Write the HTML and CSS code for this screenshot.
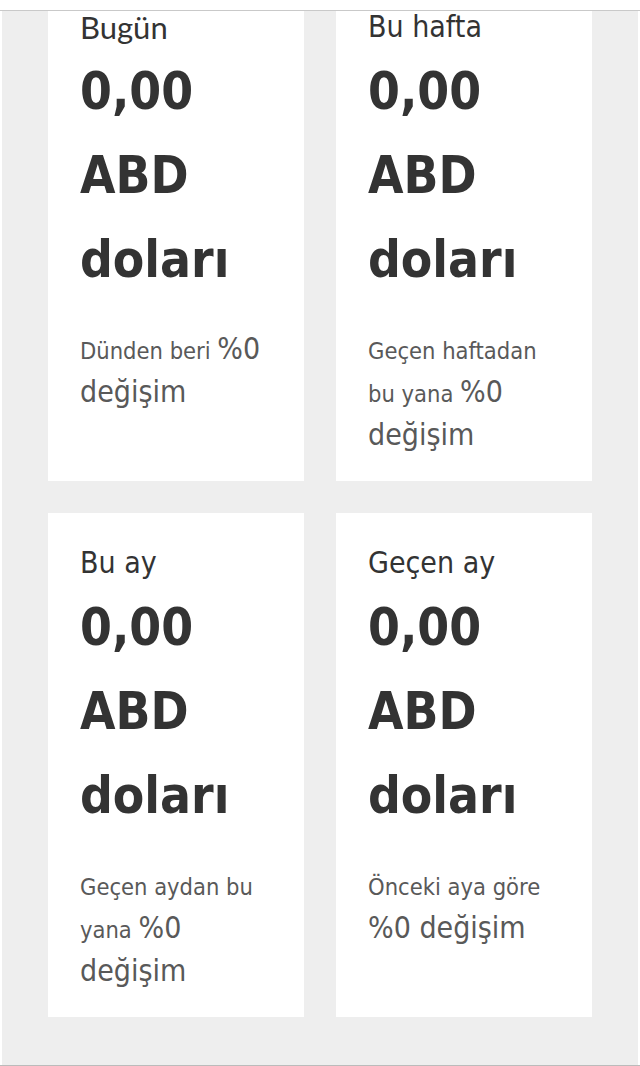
FILE: index.html
```html
<!DOCTYPE html>
<html lang="tr">
  <head>
    <meta charset="utf-8" />
    <meta name="viewport" content="width=device-width, initial-scale=1.0" />
    <title>Kazançlar</title>
    <link rel="stylesheet" href="styles.css">
  </head>
  <body>
    <div class="stats-wrap">
      <div class="stats-panel">
        <div class="stats-grid">
          <div class="stat-card">
            <h3 class="stat-title stat-title--first">Bugün</h3>
            <div class="stat-value">0,00 ABD doları</div>
            <p class="stat-change">Dünden beri <span class="stat-pct">%0 değişim</span></p>
          </div>
          <div class="stat-card">
            <h3 class="stat-title">Bu hafta</h3>
            <div class="stat-value">0,00 ABD doları</div>
            <p class="stat-change">Geçen haftadan bu yana <span class="stat-pct">%0 değişim</span></p>
          </div>
          <div class="stat-card">
            <h3 class="stat-title">Bu ay</h3>
            <div class="stat-value">0,00 ABD doları</div>
            <p class="stat-change">Geçen aydan bu yana <span class="stat-pct">%0 değişim</span></p>
          </div>
          <div class="stat-card">
            <h3 class="stat-title">Geçen ay</h3>
            <div class="stat-value">0,00 ABD doları</div>
            <p class="stat-change">Önceki aya göre <span class="stat-pct">%0 değişim</span></p>
          </div>
        </div>
      </div>
    </div>
  </body>
</html>
```

FILE: styles.css
```css
:root {
  --page-bg: #ffffff;
  --panel-bg: #eeeeee;
  --card-bg: #ffffff;
  --main-text-color: #333333;
  --muted-text-color: #595959;
  --line-color: #c9c9c9;
}

* {
  box-sizing: border-box;
}

body {
  margin: 0;
  background-color: var(--page-bg);
  font-family: "DejaVu Sans Condensed", "DejaVu Sans", sans-serif;
  font-stretch: condensed;
}

.stats-wrap {
  margin-top: 10px;
  border-top: 1px solid var(--line-color);
  border-bottom: 1px solid #bbbbbb;
}

.stats-panel {
  margin: 0 2px;
  background-color: var(--panel-bg);
  overflow: hidden;
  padding: 0 46px 48px;
}

.stats-grid {
  display: grid;
  grid-template-columns: 1fr 1fr;
  gap: 32px;
  margin-top: -34px;
}

.stat-card {
  background-color: var(--card-bg);
  padding: 32px 32px 22px;
}

.stat-title {
  margin: 0;
  font-size: 30px;
  line-height: 36px;
  font-weight: normal;
  color: var(--main-text-color);
}

.stat-title--first {
  font-family: Lato, sans-serif;
  font-stretch: normal;
  font-size: 31px;
}

.stat-value {
  margin-top: 5px;
  font-size: 51px;
  line-height: 84px;
  font-weight: bold;
  color: var(--main-text-color);
}

.stat-change {
  margin: 28px 0 0;
  font-size: 23.5px;
  line-height: 43px;
  color: var(--muted-text-color);
}

.stat-pct {
  font-size: 30px;
  line-height: 1;
}
```
